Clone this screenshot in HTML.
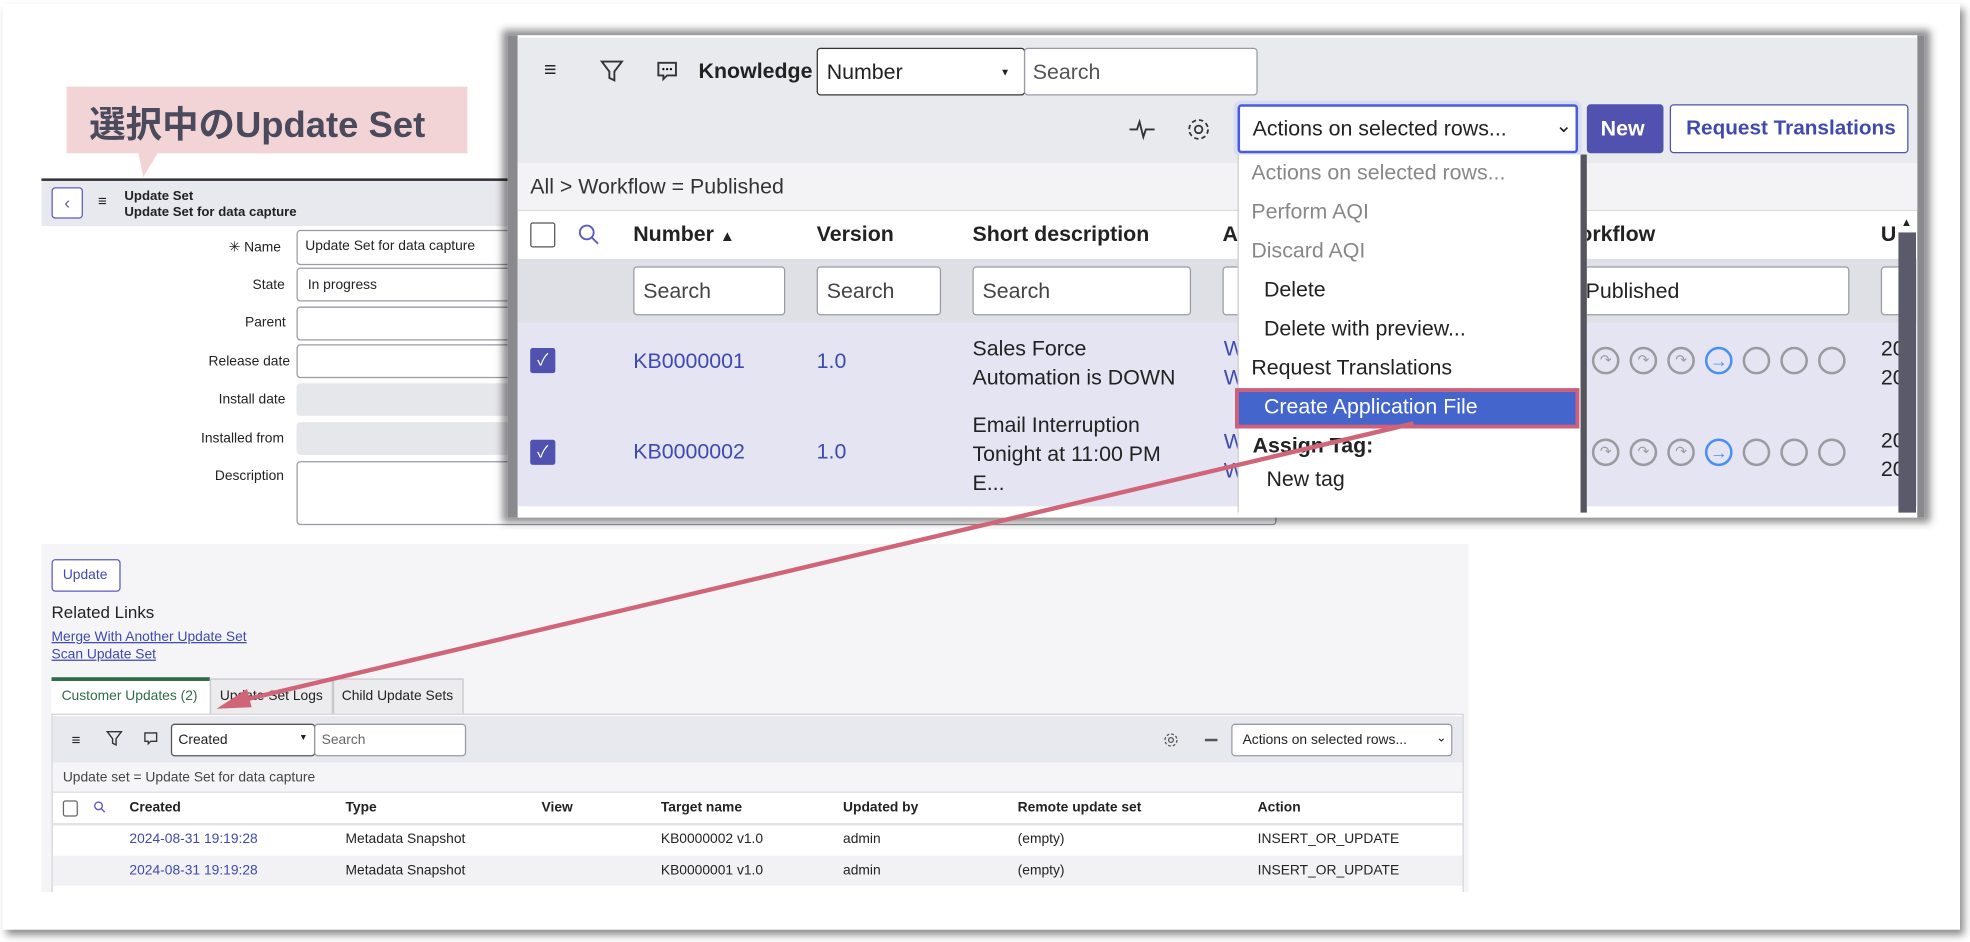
<!DOCTYPE html>
<html><head><meta charset="utf-8">
<style>
*{box-sizing:border-box;margin:0;padding:0}
html,body{width:1970px;height:942px;overflow:hidden;background:#fff}
#w{position:absolute;left:0;top:0;width:1568px;height:750px;transform:scale(1.2564);transform-origin:0 0;font-family:"Liberation Sans","Noto Sans CJK JP",sans-serif;color:#222}
.a{position:absolute}
.frame{left:2px;top:3px;width:1558px;height:737px;background:#fff;box-shadow:3px 4px 6px rgba(0,0,0,.45)}
.t{position:absolute;white-space:nowrap}
.inp{position:absolute;background:#fff;border:1px solid #9a9aa6;border-radius:3px}
.gr{background:#e6e7ea;border-color:#e6e7ea}
.s11{font-size:11px}
.big{font-size:17px}
.lnk{color:#3f4ab0}
.circ{position:absolute;width:22px;height:22px;border:2px solid #9a9aa0;border-radius:50%;color:#9a9aa0;font-size:11px;line-height:18px;text-align:center}
</style></head><body><div id="w">
<div class="a frame"></div>

<div class="a" style="left:53px;top:69px;width:319px;height:53px;background:#f2d4d6"></div>
<div class="a" style="left:110px;top:121px;width:0;height:0;border-left:4px solid transparent;border-right:12px solid transparent;border-top:20px solid #f2d4d6"></div>
<div class="t" style="left:71px;top:76px;font-size:29px;font-weight:bold;color:#4a4a5c">選択中のUpdate Set</div>

<div class="a" style="left:33px;top:142px;width:490px;height:38px;background:#e8e9ee;border-top:2px solid #333"></div>
<div class="a" style="left:41px;top:149px;width:25px;height:25px;border:1px solid #5b5bc0;border-radius:3px;background:#fff;color:#5b5bc0;font-size:14px;text-align:center;line-height:22px">‹</div>
<div class="t" style="left:78px;top:153px;font-size:12px">≡</div>
<div class="t" style="left:99px;top:150px;font-size:10.5px;font-weight:bold;line-height:13px">Update Set<br>Update Set for data capture</div>

<div class="t s11" style="left:182px;top:190px">✳ Name</div>
<div class="inp" style="left:236px;top:183px;width:780px;height:28px"></div><div class="t s11" style="left:243px;top:190px">Update Set for data capture</div>
<div class="t s11" style="left:201px;top:221px">State</div>
<div class="inp" style="left:236px;top:213px;width:780px;height:27px"></div><div class="t s11" style="left:245px;top:221px">In progress</div>
<div class="t s11" style="left:195px;top:251px">Parent</div>
<div class="inp" style="left:236px;top:244px;width:780px;height:27px"></div>
<div class="t s11" style="left:166px;top:282px">Release date</div>
<div class="inp" style="left:236px;top:274px;width:780px;height:27px"></div>
<div class="t s11" style="left:174px;top:312px">Install date</div>
<div class="inp gr" style="left:236px;top:305px;width:780px;height:26px"></div>
<div class="t s11" style="left:160px;top:343px">Installed from</div>
<div class="inp gr" style="left:236px;top:336px;width:780px;height:26px"></div>
<div class="t s11" style="left:171px;top:373px">Description</div>
<div class="inp" style="left:236px;top:367px;width:780px;height:51px"></div>

<div class="a" style="left:33px;top:433px;width:1136px;height:277px;background:#f5f5f8"></div>
<div class="a" style="left:41px;top:445px;width:55px;height:26px;border:1px solid #5b5bc0;border-radius:3px;background:#fff"></div>
<div class="t s11 lnk" style="left:50px;top:452px">Update</div>
<div class="t" style="left:41px;top:480px;font-size:13.5px">Related Links</div>
<div class="t s11 lnk" style="left:41px;top:501px;text-decoration:underline">Merge With Another Update Set</div>
<div class="t s11 lnk" style="left:41px;top:515px;text-decoration:underline">Scan Update Set</div>
<div class="a" style="left:41px;top:539px;width:126px;height:30px;background:#fff;border-top:3px solid #2f6b4a"></div>
<div class="t s11" style="left:49px;top:548px;color:#2f6b4a">Customer Updates (2)</div>
<div class="a" style="left:167px;top:540px;width:98px;height:29px;background:#ececef;border:1px solid #c8c8cc"></div>
<div class="t s11" style="left:175px;top:548px">Update Set Logs</div>
<div class="a" style="left:265px;top:540px;width:104px;height:29px;background:#ececef;border:1px solid #c8c8cc"></div>
<div class="t s11" style="left:272px;top:548px">Child Update Sets</div>
<div class="a" style="left:41px;top:568px;width:1124px;height:142px;background:#fff;border:1px solid #d4d4d8;border-bottom:none"></div>
<div class="a" style="left:42px;top:570px;width:1122px;height:37px;background:#e8e9ee"></div>
<div class="t" style="left:57px;top:582px;font-size:12px">≡</div>
<svg class="a" style="left:84px;top:581px" width="14" height="14" viewBox="0 0 20 20"><path d="M2 2h16l-6 8v7l-4-2v-5z" fill="none" stroke="#333" stroke-width="1.6"/></svg>
<svg class="a" style="left:114px;top:582px" width="12" height="12" viewBox="0 0 18 18"><path d="M2 2h14v10h-7l-3 3v-3h-4z" fill="none" stroke="#333" stroke-width="1.6"/></svg>
<div class="inp" style="left:136px;top:576px;width:115px;height:26px;border-color:#555"></div><div class="t s11" style="left:142px;top:583px">Created</div><div class="t" style="left:238px;top:584px;font-size:7px">▼</div>
<div class="inp" style="left:250px;top:576px;width:121px;height:26px"></div><div class="t s11" style="left:256px;top:583px;color:#666">Search</div>
<svg class="a" style="left:925px;top:582px" width="14" height="14" viewBox="0 0 22 22"><circle cx="11" cy="11" r="3" fill="none" stroke="#555" stroke-width="1.6"/><circle cx="11" cy="11" r="7.5" fill="none" stroke="#555" stroke-width="1.6" stroke-dasharray="3.5 2.4"/></svg>
<div class="a" style="left:959px;top:588px;width:10px;height:1.5px;background:#555"></div>
<div class="inp" style="left:980px;top:576px;width:176px;height:26px"></div><div class="t s11" style="left:989px;top:583px">Actions on selected rows...</div><div class="t" style="left:1143px;top:582px;font-size:10px">⌄</div>
<div class="a" style="left:42px;top:607px;width:1122px;height:24px;background:#f5f5f8;border-bottom:1px solid #ddd"></div>
<div class="t s11" style="left:50px;top:613px;color:#444">Update set = Update Set for data capture</div>
<div class="a" style="left:50px;top:637px;width:12px;height:13px;border:1px solid #666;border-radius:2px"></div>
<svg class="a" style="left:74px;top:637px" width="11" height="11" viewBox="0 0 20 20"><circle cx="8" cy="8" r="5.5" fill="none" stroke="#5b5bc0" stroke-width="2"/><path d="M12 12l5 5" stroke="#5b5bc0" stroke-width="2"/></svg>
<div class="a" style="left:42px;top:655px;width:1122px;height:2px;background:#e3e3e6"></div>
<div class="t s11" style="left:103px;top:637px;font-weight:bold">Created</div>
<div class="t s11" style="left:275px;top:637px;font-weight:bold">Type</div>
<div class="t s11" style="left:431px;top:637px;font-weight:bold">View</div>
<div class="t s11" style="left:526px;top:637px;font-weight:bold">Target name</div>
<div class="t s11" style="left:671px;top:637px;font-weight:bold">Updated by</div>
<div class="t s11" style="left:810px;top:637px;font-weight:bold">Remote update set</div>
<div class="t s11" style="left:1001px;top:637px;font-weight:bold">Action</div>
<div class="a" style="left:42px;top:681px;width:1122px;height:24px;background:#f2f2f4"></div>
<div class="t s11 lnk" style="left:103px;top:662px">2024-08-31 19:19:28</div>
<div class="t s11" style="left:275px;top:662px">Metadata Snapshot</div>
<div class="t s11" style="left:526px;top:662px">KB0000002 v1.0</div>
<div class="t s11" style="left:671px;top:662px">admin</div>
<div class="t s11" style="left:810px;top:662px">(empty)</div>
<div class="t s11" style="left:1001px;top:662px">INSERT_OR_UPDATE</div>
<div class="t s11 lnk" style="left:103px;top:687px">2024-08-31 19:19:28</div>
<div class="t s11" style="left:275px;top:687px">Metadata Snapshot</div>
<div class="t s11" style="left:526px;top:687px">KB0000001 v1.0</div>
<div class="t s11" style="left:671px;top:687px">admin</div>
<div class="t s11" style="left:810px;top:687px">(empty)</div>
<div class="t s11" style="left:1001px;top:687px">INSERT_OR_UPDATE</div>

<div class="a" style="left:404px;top:28px;width:1128px;height:384px;background:#fff;box-shadow:0 0 6px 4px rgba(0,0,0,.45);overflow:hidden">
 <div class="a" style="left:0;top:0;width:8px;height:384px;background:#8a8a8e"></div>
 <div class="a" style="left:1122px;top:0;width:6px;height:384px;background:#8a8a8e"></div>
 <div class="a" style="left:8px;top:2px;width:1114px;height:100px;background:#e9eaee"></div>
 <div class="a" style="left:8px;top:102px;width:1114px;height:38px;background:#f3f3f6;border-bottom:1px solid #ddd"></div>
 <div class="a" style="left:8px;top:178px;width:1114px;height:51px;background:#dfe0e6"></div>
 <div class="a" style="left:8px;top:229px;width:1114px;height:146px;background:#e4e4f2"></div>
</div>
<div class="t" style="left:433px;top:46px;font-size:17px">≡</div>
<svg class="a" style="left:477px;top:47px" width="20" height="20" viewBox="0 0 20 20"><path d="M2 2h16l-6 8v7l-4-2v-5z" fill="none" stroke="#333" stroke-width="1.5"/></svg>
<svg class="a" style="left:522px;top:48px" width="18" height="18" viewBox="0 0 18 18"><path d="M2 2h14v10h-7l-3 3v-3h-4z" fill="none" stroke="#333" stroke-width="1.5"/><circle cx="6" cy="7" r=".9"/><circle cx="9" cy="7" r=".9"/><circle cx="12" cy="7" r=".9"/></svg>
<div class="t" style="left:556px;top:47px;font-size:17px;font-weight:bold">Knowledge</div>
<div class="inp" style="left:650px;top:38px;width:166px;height:38px;border:1.5px solid #333"></div>
<div class="t big" style="left:658px;top:48px">Number</div><div class="t" style="left:796px;top:53px;font-size:8px">▼</div>
<div class="inp" style="left:815px;top:38px;width:186px;height:38px"></div><div class="t big" style="left:822px;top:48px;color:#555">Search</div>
<svg class="a" style="left:898px;top:92px" width="22" height="22" viewBox="0 0 22 22"><path d="M1 11h6l2-6 3 12 2-6h7" fill="none" stroke="#333" stroke-width="1.5"/></svg>
<svg class="a" style="left:943px;top:92px" width="22" height="22" viewBox="0 0 22 22"><circle cx="11" cy="11" r="3" fill="none" stroke="#333" stroke-width="1.4"/><circle cx="11" cy="11" r="7.5" fill="none" stroke="#333" stroke-width="1.4" stroke-dasharray="3.5 2.4"/></svg>
<div class="inp" style="left:985px;top:83px;width:271px;height:39px;border:2px solid #4a5be0;box-shadow:0 0 0 3px #d8dcf5"></div>
<div class="t big" style="left:997px;top:93px">Actions on selected rows...</div><div class="t" style="left:1238px;top:90px;font-size:16px">⌄</div>
<div class="a" style="left:1263px;top:83px;width:61px;height:39px;background:#5151b0;border-radius:3px"></div>
<div class="t big" style="left:1274px;top:93px;color:#fff;font-weight:bold">New</div>
<div class="a" style="left:1329px;top:83px;width:190px;height:39px;background:#fff;border:1.5px solid #5151b0;border-radius:3px"></div>
<div class="t" style="left:1342px;top:93px;font-size:16.5px;color:#3f4ab0;font-weight:bold">Request Translations</div>
<div class="t big" style="left:422px;top:139px;color:#333">All &gt; Workflow = Published</div>
<div class="a" style="left:422px;top:177px;width:20px;height:20px;border:1.5px solid #555;border-radius:2px;background:#fff"></div>
<svg class="a" style="left:459px;top:177px" width="20" height="20" viewBox="0 0 20 20"><circle cx="8" cy="8" r="5.5" fill="none" stroke="#5b5bc0" stroke-width="1.5"/><path d="M12 12l5 5" stroke="#5b5bc0" stroke-width="1.5"/></svg>
<div class="t big" style="left:504px;top:177px;font-weight:bold">Number <span style="font-size:12px">▲</span></div>
<div class="t big" style="left:650px;top:177px;font-weight:bold">Version</div>
<div class="t big" style="left:774px;top:177px;font-weight:bold">Short description</div>
<div class="t big" style="left:973px;top:177px;font-weight:bold">A</div>
<div class="t big" style="left:1257px;top:177px;font-weight:bold">orkflow</div>
<div class="t big" style="left:1497px;top:177px;font-weight:bold">U</div>
<div class="inp" style="left:504px;top:212px;width:121px;height:39px"></div><div class="t big" style="left:512px;top:222px;color:#444">Search</div>
<div class="inp" style="left:650px;top:212px;width:99px;height:39px"></div><div class="t big" style="left:658px;top:222px;color:#444">Search</div>
<div class="inp" style="left:774px;top:212px;width:174px;height:39px"></div><div class="t big" style="left:782px;top:222px;color:#444">Search</div>
<div class="inp" style="left:973px;top:212px;width:20px;height:39px"></div>
<div class="inp" style="left:1250px;top:212px;width:222px;height:39px"></div><div class="t big" style="left:1262px;top:222px">Published</div>
<div class="inp" style="left:1497px;top:212px;width:20px;height:39px"></div>
<div class="a" style="left:422px;top:277px;width:20px;height:20px;background:#5151b0;border-radius:2px;color:#fff;font-size:13px;text-align:center;line-height:20px">✓</div>
<div class="a" style="left:422px;top:350px;width:20px;height:20px;background:#5151b0;border-radius:2px;color:#fff;font-size:13px;text-align:center;line-height:20px">✓</div>
<div class="t big lnk" style="left:504px;top:278px">KB0000001</div>
<div class="t big lnk" style="left:650px;top:278px">1.0</div>
<div class="t big" style="left:774px;top:266px;line-height:23px">Sales Force<br>Automation is DOWN</div>
<div class="t big lnk" style="left:974px;top:266px;line-height:23px">W<br>W</div>
<div class="t big lnk" style="left:504px;top:350px">KB0000002</div>
<div class="t big lnk" style="left:650px;top:350px">1.0</div>
<div class="t big" style="left:774px;top:327px;line-height:23px">Email Interruption<br>Tonight at 11:00 PM<br>E...</div>
<div class="t big lnk" style="left:974px;top:340px;line-height:23px">W<br>W</div>
<div class="t big" style="left:1497px;top:266px;line-height:23px">20<br>20</div>
<div class="t big" style="left:1497px;top:339px;line-height:23px">20<br>20</div>
<div class="circ" style="left:1267px;top:276px">↷</div><div class="circ" style="left:1297px;top:276px">↷</div><div class="circ" style="left:1327px;top:276px">↷</div><div class="circ" style="left:1357px;top:276px;border-color:#4a90f0;color:#4a90f0;font-size:14px">→</div><div class="circ" style="left:1387px;top:276px"></div><div class="circ" style="left:1417px;top:276px"></div><div class="circ" style="left:1447px;top:276px"></div>
<div class="circ" style="left:1267px;top:349px">↷</div><div class="circ" style="left:1297px;top:349px">↷</div><div class="circ" style="left:1327px;top:349px">↷</div><div class="circ" style="left:1357px;top:349px;border-color:#4a90f0;color:#4a90f0;font-size:14px">→</div><div class="circ" style="left:1387px;top:349px"></div><div class="circ" style="left:1417px;top:349px"></div><div class="circ" style="left:1447px;top:349px"></div>
<div class="a" style="left:1511px;top:185px;width:14px;height:223px;background:#5a5a6a"></div>
<div class="t" style="left:1513px;top:172px;font-size:9px">▲</div>
<div class="a" style="left:985px;top:123px;width:278px;height:285px;background:#fff;border-right:5px solid #55555e;border-left:1px solid #ccc"></div>
<div class="t big" style="left:996px;top:128px;color:#888">Actions on selected rows...</div>
<div class="t big" style="left:996px;top:159px;color:#888">Perform AQI</div>
<div class="t big" style="left:996px;top:190px;color:#888">Discard AQI</div>
<div class="t big" style="left:1006px;top:221px">Delete</div>
<div class="t big" style="left:1006px;top:252px">Delete with preview...</div>
<div class="t big" style="left:996px;top:283px">Request Translations</div>
<div class="a" style="left:983px;top:309px;width:274px;height:32px;background:#4466cc;border:3px solid #d0607a"></div>
<div class="t big" style="left:1006px;top:314px;color:#fff">Create Application File</div>
<div class="t big" style="left:997px;top:345px;font-weight:bold">Assign Tag:</div>
<div class="t big" style="left:1008px;top:372px">New tag</div>

<svg class="a" style="left:0;top:0" width="1568" height="750"><line x1="1125" y1="337" x2="190" y2="558" stroke="#d06478" stroke-width="3.5"/><path d="M176 563l20-13 3 12z" fill="#d06478" stroke="#d06478" stroke-width="2"/></svg>
</div></body></html>
